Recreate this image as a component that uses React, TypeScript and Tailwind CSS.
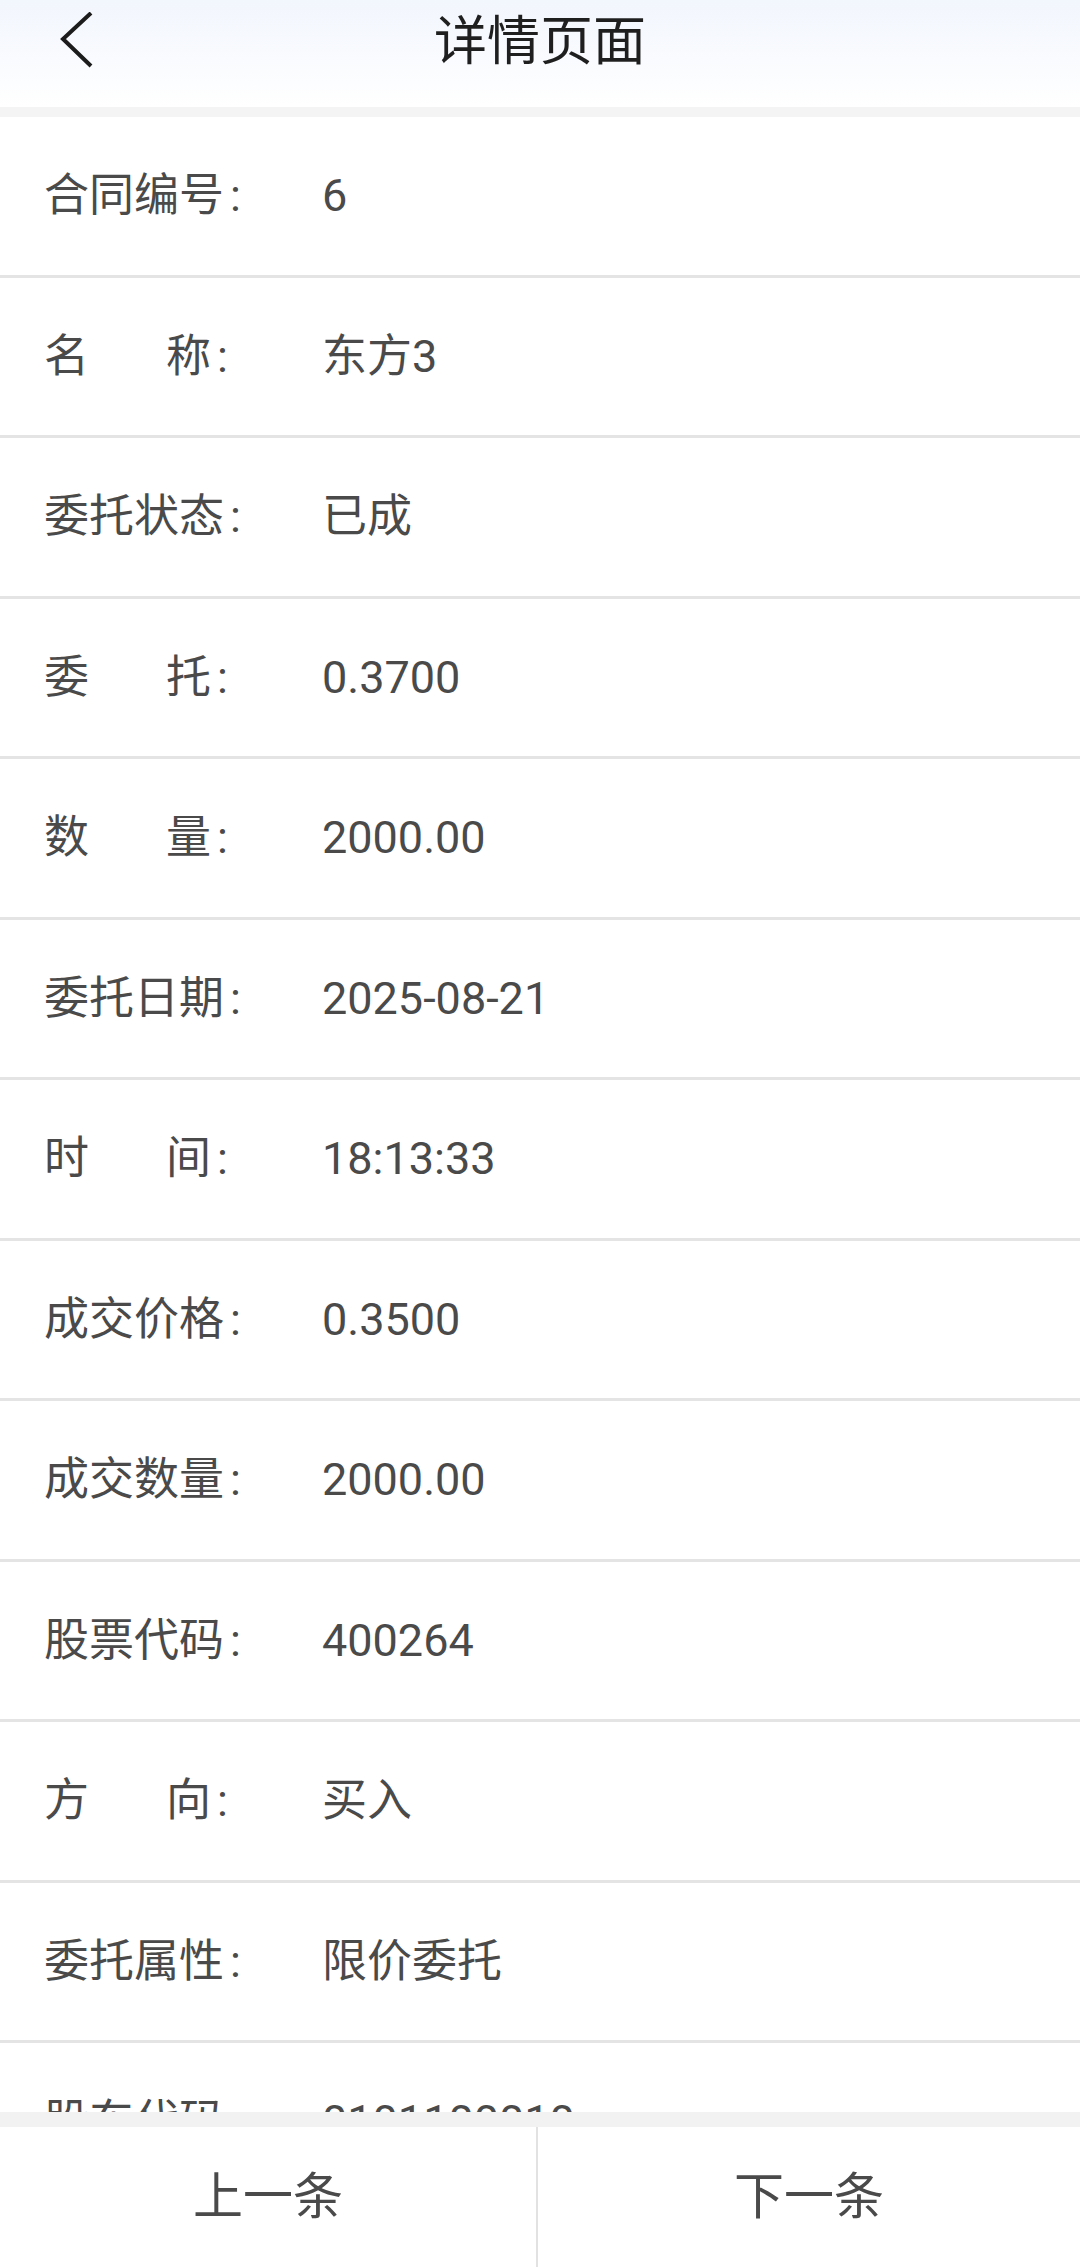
type Row = { label: string[]; value: string };

const rows: Row[] = [
  { label: ["合同编号"], value: "6" },
  { label: ["名", "称"], value: "东方3" },
  { label: ["委托状态"], value: "已成" },
  { label: ["委", "托"], value: "0.3700" },
  { label: ["数", "量"], value: "2000.00" },
  { label: ["委托日期"], value: "2025-08-21" },
  { label: ["时", "间"], value: "18:13:33" },
  { label: ["成交价格"], value: "0.3500" },
  { label: ["成交数量"], value: "2000.00" },
  { label: ["股票代码"], value: "400264" },
  { label: ["方", "向"], value: "买入" },
  { label: ["委托属性"], value: "限价委托" },
  { label: ["股东代码"], value: "0101100010" },
];

function Label({ parts }: { parts: string[] }) {
  return (
    <div className="flex w-[278px] shrink-0 items-center">
      {parts.length === 2 ? (
        <span className="flex gap-[77px]">
          <span>{parts[0]}</span>
          <span>{parts[1]}</span>
        </span>
      ) : (
        <span>{parts[0]}</span>
      )}
      <span className="ml-[6px]">:</span>
    </div>
  );
}

export default function App() {
  return (
    <div className="flex h-screen flex-col bg-white font-[Roboto,'Noto_Sans_CJK_SC',sans-serif] text-[#4a4a4a]">
      <header className="h-[107px] shrink-0 bg-gradient-to-b from-[#f2f6fd] to-white">
        <div className="grid h-[84px] grid-cols-[1fr_auto_1fr] items-center">
          <div className="pl-[58px]">
            <svg width="40" height="60" viewBox="0 0 40 60" fill="none" stroke="#1c1c1c" strokeWidth="4">
              <path d="M33 1 L5 27 L33 54" />
            </svg>
          </div>
          <h1 className="text-[53px] leading-none text-[#1f1f1f]">详情页面</h1>
          <div />
        </div>
      </header>

      <main className="min-h-0 flex-1 overflow-hidden border-t-[10px] border-[#f4f4f4]">
        {rows.map((r, i) => (
          <div key={i} className="flex h-[160.5px] items-center border-b-[3px] border-[#e4e4e4] pl-[44px] text-[45px] leading-none">
            <Label parts={r.label} />
            <span>{r.value}</span>
          </div>
        ))}
      </main>

      <footer className="flex h-[155px] shrink-0 border-t-[15px] border-[#f2f2f2] bg-white text-[50px] leading-none">
        <button className="flex w-[538px] items-center justify-center border-r-2 border-[#e2e2e2] text-[#4a4a4a]">上一条</button>
        <button className="flex flex-1 items-center justify-center text-[#4a4a4a]">下一条</button>
      </footer>
    </div>
  );
}
